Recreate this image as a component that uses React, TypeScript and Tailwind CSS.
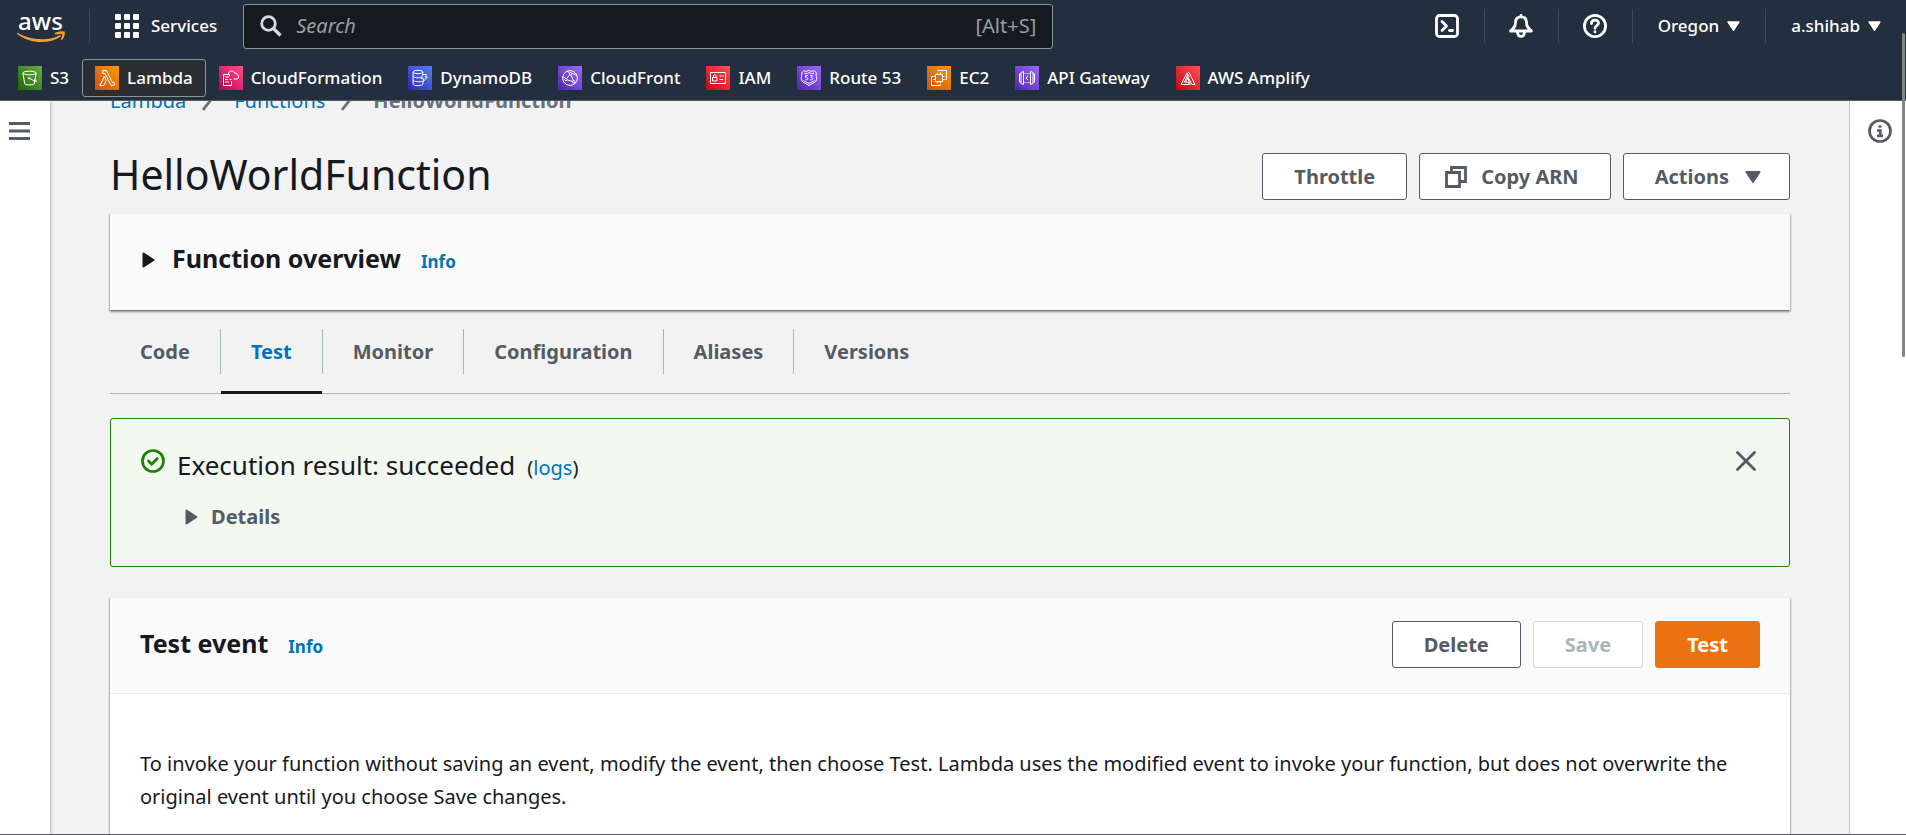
import React from "react";
import type { ReactNode } from "react";

type Service = { name: string; from: string; to: string; art: ReactNode; active?: boolean };

const services: Service[] = [
  {
    name: "S3", from: "#1b660f", to: "#6cae3e",
    art: (
      <>
        <ellipse cx="11.5" cy="7" rx="6.6" ry="1.8" />
        <path d="M4.9 7.2 6.8 18c.3 1.2 9 1.2 9.4 0l1.900-10.800M11 12.200l6 3c1.500.6 2.200.1.800-1l-1.200-.9" />
        <circle cx="11" cy="12.200" r=".7" />
      </>
    ),
  },
  {
    name: "Lambda", from: "#c8511b", to: "#ff9900", active: true,
    art: <path d="M9.300 10.600 4.800 19.600h3.900l2.500-5.200zM7.700 4.600h3.600l6.300 12.100 1.300-.5 1 2.500-3.600 1.200L9.900 7.500H7.700z" />,
  },
  {
    name: "CloudFormation", from: "#b0084d", to: "#ff4f8b",
    art: (
      <>
        <path d="M10.500 10V8.500h-6v11h8v-4M6.200 11h4M6.200 13.500h2.500M6.200 16h3.500M10.500 13.500h2" />
        <path d="M9.500 8c0-3.600 5.400-4.200 6.200-.8 1.400-.7 2.400.2 2.400 1.600 2.200.5 2 4.200-.4 4.200h-3" />
      </>
    ),
  },
  {
    name: "DynamoDB", from: "#2e27ad", to: "#527fff",
    art: (
      <>
        <ellipse cx="10" cy="6" rx="4.900" ry="1.700" />
        <path d="M5.100 6v12c0 2.200 9.800 2.200 9.800 0v-2.500M5.100 10c0 1.900 7 2.200 8.500 1.200M5.100 14c0 1.900 7.500 2.200 9 1.200M14.900 6v1.800" />
        <path d="M14.500 8.500h4l-1.200 2.700h2L14.800 16l1-3.200h-2.300z" />
      </>
    ),
  },
  {
    name: "CloudFront", from: "#4d27a8", to: "#a166ff",
    art: (
      <>
        <circle cx="12" cy="12" r="7.400" />
        <circle cx="12.500" cy="7.700" r="1.200" /><circle cx="8" cy="13.500" r="1.200" /><circle cx="15.700" cy="15.700" r="1.200" />
        <path d="m11.700 8.700-3 3.800M13 8.900l2.300 5.600M9.200 13.900l5.200 1.500M4.800 11c2.200.3 2.800 1.200 2.800 1.200M16.500 17c0 1-.8 1.500-.8 1.500M9 5.400c1.500.3 2.500 1.300 2.500 1.300M14 7.500c3 .5 4.900 2.500 4.900 2.500" />
      </>
    ),
  },
  {
    name: "IAM", from: "#bd0816", to: "#ff5252",
    art: (
      <>
        <path d="M4.500 6.500h15v11h-15zM6.500 11.500h4.500v3.500H6.500zM7.500 11.500V9.800c0-1.400 2.500-1.400 2.500 0v1.700M13.500 10h2M16.500 10h1.200M13.500 13.500h3.700" />
      </>
    ),
  },
  {
    name: "Route 53", from: "#4d27a8", to: "#a166ff",
    art: (
      <>
        <path d="m7 4.500 1.500.8c2.200 0 3-.8 3.500-.8s1.300.8 3.500.8l1.500-.8 2.400 2.500c-1 3 .8 4 .3 6.500-.7 3.500-4.700 3.500-7.700 6-3-2.500-7-2.500-7.700-6-.5-2.500 1.300-3.500.3-6.500z" />
        <path d="M7 7.200c1.500.5 3.500.3 5-.5 1.500.8 3.500 1 5 .5M6.500 14.500c.8 1.200 3.700 1.700 5.500 2.900 1.800-1.200 4.700-1.700 5.500-2.900M11 9.500H8.500v1.900c3.400-.6 3.200 3 0 2.400M13 9.500h2.700l-1.500 1.900c2.600 0 2 3-1 2.400" />
      </>
    ),
  },
  {
    name: "EC2", from: "#c8511b", to: "#ff9900",
    art: (
      <>
        <path d="M8.500 8.500h7v7h-7z" />
        <path d="M10.500 8.500v-2M13.500 8.500v-2M10.500 17.500v-2M13.500 17.500v-2M8.500 10.500h-2M8.500 13.500h-2M17.500 10.500h-2M17.500 13.500h-2" />
        <path d="M10.500 5V4.500h9v9h-1M6 10.500H4.500v9h9v-1.200" />
      </>
    ),
  },
  {
    name: "API Gateway", from: "#4d27a8", to: "#a166ff",
    art: (
      <>
        <path d="M8.500 5.500v13l-2.500-1v-11zM15.500 5.500v13l2.500-1v-11zM6 8H4.500v8H6M18 8h1.500v8H18M13 9.800 11 12l2 2.200" />
        <path d="M9.500 7.500h5M9.500 16.500h5" strokeDasharray="1 1" />
      </>
    ),
  },
  {
    name: "AWS Amplify", from: "#bd0816", to: "#ff5252",
    art: <path d="M5 18.500h8.500l-1.200-2.300H9.500l2-4.500 1.300 3.300M5 18.500 11 7l1.700 3.500M12 6.500h1l6 12h-3L10.800 9M8 16.800l4-8M14.500 18.500 11.500 12" />,
  },
];

function ServiceIcon({ service }: { service: Service }) {
  const id = "grad-" + service.name.replace(/\s/g, "");
  return (
    <svg viewBox="0 0 24 24" className="size-6 shrink-0" aria-hidden="true">
      <defs>
        <linearGradient id={id} x1="0" y1="1" x2="1" y2="0">
          <stop offset="0" stopColor={service.from} />
          <stop offset="1" stopColor={service.to} />
        </linearGradient>
      </defs>
      <rect width="24" height="24" fill={`url(#${id})`} />
      <g fill="none" stroke="#fff" strokeWidth="1" strokeLinejoin="round">{service.art}</g>
    </svg>
  );
}

function Caret({ className }: { className: string }) {
  return (
    <svg viewBox="0 0 16 12" className={className} aria-hidden="true">
      <path d="M1.500 1h13L8 11z" fill="currentColor" stroke="currentColor" strokeWidth="2" strokeLinejoin="round" />
    </svg>
  );
}

function Triangle() {
  return (
    <svg viewBox="0 0 13 16" className="h-4 w-[13px] shrink-0" aria-hidden="true">
      <path d="M1.500 1.500v13l10-6.500z" fill="currentColor" stroke="currentColor" strokeWidth="2" strokeLinejoin="round" />
    </svg>
  );
}

function HeaderCell({ children, label }: { children: ReactNode; label: string }) {
  return (
    <button aria-label={label} className="flex h-[34px] w-[74px] items-center justify-center border-l border-[#3d4855] first:border-transparent">
      <svg viewBox="0 0 24 24" className="size-6" fill="none" stroke="currentColor" strokeWidth="2.8" strokeLinecap="round" strokeLinejoin="round" aria-hidden="true">
        {children}
      </svg>
    </button>
  );
}

function Header() {
  return (
    <header className="relative z-10 shrink-0 border-b border-[#545b64] bg-[#232f3e] text-[17px] leading-6 text-white">
      <div className="flex h-[52px] items-center">
        <a href="#home" aria-label="AWS home" className="flex w-[89px] shrink-0 flex-col items-center pr-2">
          <span className="text-[24px] leading-[20px] font-medium">aws</span>
          <svg viewBox="0 0 48 11" className="h-[11px] w-12" aria-hidden="true">
            <path d="M.6 1.800C12 9 32 10.500 42.500 4.200c1.200-.5 2 .8.900 1.600C32 14 11 12 .4 3.200c-.7-.7-.4-1.700.2-1.400z" fill="#f79b34" />
            <path d="M38 2c2.500-2 9-2.300 9.700-1.200.7 1.200-.4 6.200-2.900 8.300-.5.400-1.200.2-.9-.6.6-1.500 1.800-4.400 1.300-5.100-.6-.7-4-.3-6.500 0-.9.100-1.200-.8-.7-1.400z" fill="#f79b34" />
          </svg>
        </a>
        <button className="flex h-[34px] shrink-0 items-center gap-3 border-l border-[#3d4855] pr-[26px] pl-[25px] font-medium">
          <svg viewBox="0 0 24 24" className="size-6" fill="currentColor" aria-hidden="true">
            {[0, 9, 18].flatMap((y) => [0, 9, 18].map((x) => <rect key={`${x}-${y}`} x={x} y={y} width="6" height="6" rx="1" />))}
          </svg>
          Services
        </button>
        <label className="flex h-[45px] w-[810px] items-center gap-[14px] rounded-[3px] border border-[#879596] bg-[#16191f] px-4 text-[20px] text-[#95a0a5]">
          <svg viewBox="0 0 22 22" className="size-[22px] shrink-0 text-[#d5dbdb]" fill="none" stroke="currentColor" aria-hidden="true">
            <circle cx="8.500" cy="8.500" r="6.800" strokeWidth="2.800" />
            <path d="m13.500 13.500 7 7" strokeWidth="3.400" />
          </svg>
          <input type="text" aria-label="Search" placeholder="Search" className="min-w-0 grow bg-transparent outline-none placeholder:text-[#95a0a5] placeholder:italic" />
          <span>[Alt+S]</span>
        </label>
        <div className="ml-auto flex shrink-0 items-center">
          <HeaderCell label="CloudShell">
            <rect x="1.500" y="1.500" width="21" height="21" rx="3" />
            <path d="m7 7.500 4.500 4.500L7 16.500M14.500 16.500h3" />
          </HeaderCell>
          <HeaderCell label="Notifications">
            <path d="M12 1.500v1M12 2.800c-4 0-5.500 2.800-5.500 6 0 4-2 5.700-5 8.200h21c-3-2.500-5-4.200-5-8.200 0-3.200-1.500-6-5.500-6z" />
            <path d="M8.500 17.500c0 6.500 7 6.500 7 0" />
          </HeaderCell>
          <HeaderCell label="Help">
            <circle cx="12" cy="12" r="10.600" />
            <path d="M8.500 9.500c0-4.500 7-4.500 7-.3 0 2.500-3.500 2.300-3.500 5M12 17.600v.3" />
          </HeaderCell>
          <button className="flex h-[34px] items-center gap-2 border-l border-[#3d4855] px-[25px] font-medium">
            Oregon <Caret className="h-[10px] w-[13px]" />
          </button>
          <button className="flex h-[34px] items-center gap-2 border-l border-[#3d4855] px-[25px] font-medium">
            a.shihab <Caret className="h-[10px] w-[13px]" />
          </button>
        </div>
      </div>
      <nav aria-label="Favorite services" className="flex h-12 items-start pt-[7px] pl-[5px]">
        {services.map((s) => (
          <a
            key={s.name}
            href={"#" + s.name}
            className={
              "flex h-[38px] items-center gap-2 rounded-[3px] border px-3 font-medium " +
              (s.active ? "border-[#879596] bg-[#2a2e33]" : "border-transparent")
            }
          >
            <ServiceIcon service={s} />
            {s.name}
          </a>
        ))}
      </nav>
    </header>
  );
}

function Button({ children, variant = "normal", className = "px-[31px]" }: { children: ReactNode; variant?: "normal" | "primary" | "disabled"; className?: string }) {
  const look = {
    normal: "border-[#545b64] bg-white text-[#545b64]",
    primary: "border-[#ec7211] bg-[#ec7211] text-white",
    disabled: "border-[#d5dbdb] bg-white text-[#aab7b8]",
  }[variant];
  return (
    <button disabled={variant === "disabled"} className={"flex h-[47px] items-center rounded-[3px] border font-bold " + look + " " + className}>
      {children}
    </button>
  );
}

const tabs = ["Code", "Test", "Monitor", "Configuration", "Aliases", "Versions"];
const cardShadow = "border-t border-[#eaeded] shadow-[0_2px_2px_0_rgba(0,28,36,0.4),1px_1px_1px_0_rgba(0,28,36,0.15),-1px_1px_1px_0_rgba(0,28,36,0.15)]";

function Slash() {
  return (
    <svg viewBox="0 0 16 22" className="h-[22px] w-4" fill="none" stroke="#687078" strokeWidth="2.800" aria-hidden="true">
      <path d="M1 20 15 2" />
    </svg>
  );
}

export default function App() {
  return (
    <div className="relative flex h-screen flex-col overflow-hidden border-b border-[#545b64] bg-[#f2f2f2] font-['Noto_Sans',sans-serif] text-[20px] leading-[33px] text-[#16191f]">
      <Header />
      <div className="flex min-h-0 grow">
        <aside className="w-[51px] shrink-0 border-r border-[#c5caca] bg-white pt-[21px] pl-[9px] shadow-[1px_0_2px_0_rgba(0,28,36,0.15)]">
          <button aria-label="Open navigation" className="block text-[#545b64]">
            <svg viewBox="0 0 21 18" className="h-[18px] w-[21px]" fill="currentColor" aria-hidden="true">
              <path d="M0 0h21v3H0zM0 7.500h21v3H0zM0 15h21v3H0z" />
            </svg>
          </button>
        </aside>

        <main className="min-w-0 grow overflow-hidden px-[59px]">
          <nav aria-label="Breadcrumb" className="-mt-[17px] flex items-center gap-4">
            <a href="#lambda" className="text-[#0073bb]">Lambda</a>
            <Slash />
            <a href="#functions" className="text-[#0073bb]">Functions</a>
            <Slash />
            <span className="font-bold text-[#687078]">HelloWorldFunction</span>
          </nav>

          <div className="mt-[30px] flex items-end justify-between">
            <h1 className="text-[41px] leading-[54px]">HelloWorldFunction</h1>
            <div className="flex gap-3 pb-px">
              <Button>Throttle</Button>
              <Button className="gap-[14px] pr-[31px] pl-[25px]">
                <svg viewBox="0 0 22 22" className="size-[22px]" fill="none" stroke="currentColor" strokeWidth="2.800" aria-hidden="true">
                  <path d="M1.500 6.500h13v14h-13zM6.500 6V1.500h14v14H15" />
                </svg>
                Copy ARN
              </Button>
              <Button className="gap-4 pr-7 pl-[31px]">
                Actions <Caret className="h-3 w-4" />
              </Button>
            </div>
          </div>

          <section className={"mt-3 flex h-[97px] items-center gap-[17px] bg-[#fafafa] px-8 pb-1 " + cardShadow}>
            <Triangle />
            <div className="flex items-baseline gap-5">
              <h2 className="text-[25px] font-bold">Function overview</h2>
              <a href="#overview-info" className="text-[17px] font-bold text-[#0073bb]">Info</a>
            </div>
          </section>

          <div role="tablist" className="flex items-start border-b border-[#aab7b8] pt-[19px]">
            {tabs.map((t) => (
              <div key={t} className="group -mb-px flex items-start">
                <button
                  role="tab"
                  aria-selected={t === "Test"}
                  className={
                    "h-[65px] border-b-[3px] px-[30px] pb-[17px] font-bold " +
                    (t === "Test" ? "border-[#16191f] text-[#0073bb]" : "border-transparent text-[#545b64]")
                  }
                >
                  {t}
                </button>
                <span className="h-[45px] w-px bg-[#aab7b8] group-last:hidden" />
              </div>
            ))}
          </div>

          <section role="status" className="mt-6 flex items-start gap-3 rounded-[3px] border border-[#1d8102] bg-[#f2f7f0] px-[30px] pt-[30px] pb-[33px]">
            <svg viewBox="0 0 24 24" className="size-6 shrink-0" fill="none" stroke="#1d8102" strokeWidth="2.700" strokeLinejoin="round" strokeLinecap="round" aria-hidden="true">
              <circle cx="12" cy="12" r="10.500" />
              <path d="m7.500 12 3.200 3.200 5.500-5.700" />
            </svg>
            <div className="grow">
              <div className="flex items-baseline gap-3">
                <h2 className="text-[26px]">Execution result: succeeded</h2>
                <span>(<a href="#logs" className="text-[#0073bb]">logs</a>)</span>
              </div>
              <button className="mt-4 flex items-center gap-[13px] pl-2 font-bold text-[#545b64]">
                <Triangle />
                Details
              </button>
            </div>
            <button aria-label="Dismiss" className="px-[3px] pt-[2px] text-[#545b64]">
              <svg viewBox="0 0 20 20" className="size-5" fill="none" stroke="currentColor" strokeWidth="2.800" strokeLinecap="round" aria-hidden="true">
                <path d="m1.500 1.500 17 17M18.500 1.500l-17 17" />
              </svg>
            </button>
          </section>

          <section className={"mt-[30px] bg-white " + cardShadow}>
            <div className="flex h-[96px] items-center justify-between border-b border-[#eaeded] bg-[#fafafa] px-[30px] pb-[2px]">
              <div className="flex items-baseline gap-5">
                <h2 className="text-[25px] font-bold">Test event</h2>
                <a href="#event-info" className="text-[17px] font-bold text-[#0073bb]">Info</a>
              </div>
              <div className="flex gap-3">
                <Button>Delete</Button>
                <Button variant="disabled">Save</Button>
                <Button variant="primary">Test</Button>
              </div>
            </div>
            <p className="px-[30px] pt-[53px] pb-[60px]">
              To invoke your function without saving an event, modify the event, then choose Test. Lambda uses the modified event to invoke your function, but does not overwrite the original event until you choose Save changes.
            </p>
          </section>
        </main>

        <aside className="w-[57px] shrink-0 border-l border-[#c5caca] bg-white pt-[18px] pl-[18px]">
          <button aria-label="Open info panel" className="block text-[#545b64]">
            <svg viewBox="0 0 24 24" className="size-6" fill="none" stroke="currentColor" strokeWidth="2.700" aria-hidden="true">
              <circle cx="12" cy="12" r="10.500" />
              <path d="M10.500 7.500h3M9 11.500h3.300v5.200M9 16.800h6" />
            </svg>
          </button>
        </aside>
      </div>
      <div className="absolute top-[33px] right-px z-20 h-[324px] w-[3px] rounded-full bg-[#858585]" />
    </div>
  );
}
